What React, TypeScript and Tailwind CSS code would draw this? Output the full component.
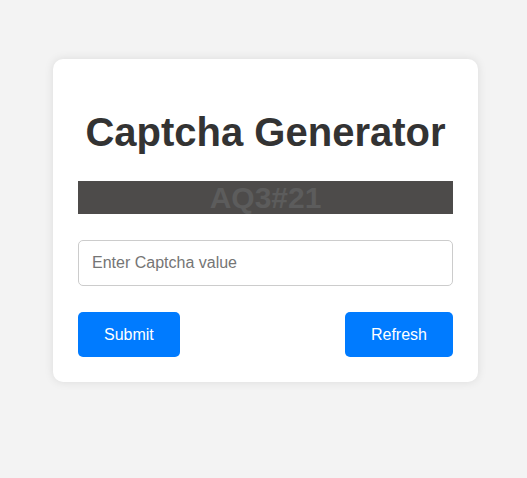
import React, { useState } from "react";

const App = () => {
  const [value, setValue] = useState("");
  return (
    <div
      className="min-h-screen bg-[#f3f3f3] pt-[59px] pb-[96px]"
      style={{ fontFamily: '"Liberation Sans", Arial, sans-serif' }}
    >
      <div className="ml-[53px] w-[425px] bg-white rounded-[10px] shadow-[0_0_10px_rgba(0,0,0,0.1)] px-[25px] pt-[50px] pb-[25px]">
        <h1 className="text-[40px] leading-[46px] font-bold text-[#333333] text-center">
          Captcha Generator
        </h1>
        <div className="mt-[26px] h-[33px] bg-[#4d4b4a] flex items-center justify-center">
          <span className="text-[30px] leading-[33px] font-bold text-[#5c5c5c]">
            AQ3#21
          </span>
        </div>
        <input
          className="mt-[26px] block w-full h-[46px] border border-[#cccccc] rounded-[5px] px-[13px] text-[16px] text-[#333] placeholder:text-[#757575] outline-none"
          placeholder="Enter Captcha value"
          value={value}
          onChange={(e) => setValue(e.target.value)}
        />
        <div className="mt-[26px] flex justify-between">
          <button className="h-[45px] px-[26px] bg-[#007bff] text-white text-[16px] rounded-[5px]">
            Submit
          </button>
          <button className="h-[45px] px-[26px] bg-[#007bff] text-white text-[16px] rounded-[5px]">
            Refresh
          </button>
        </div>
      </div>
    </div>
  );
};

export default App;
